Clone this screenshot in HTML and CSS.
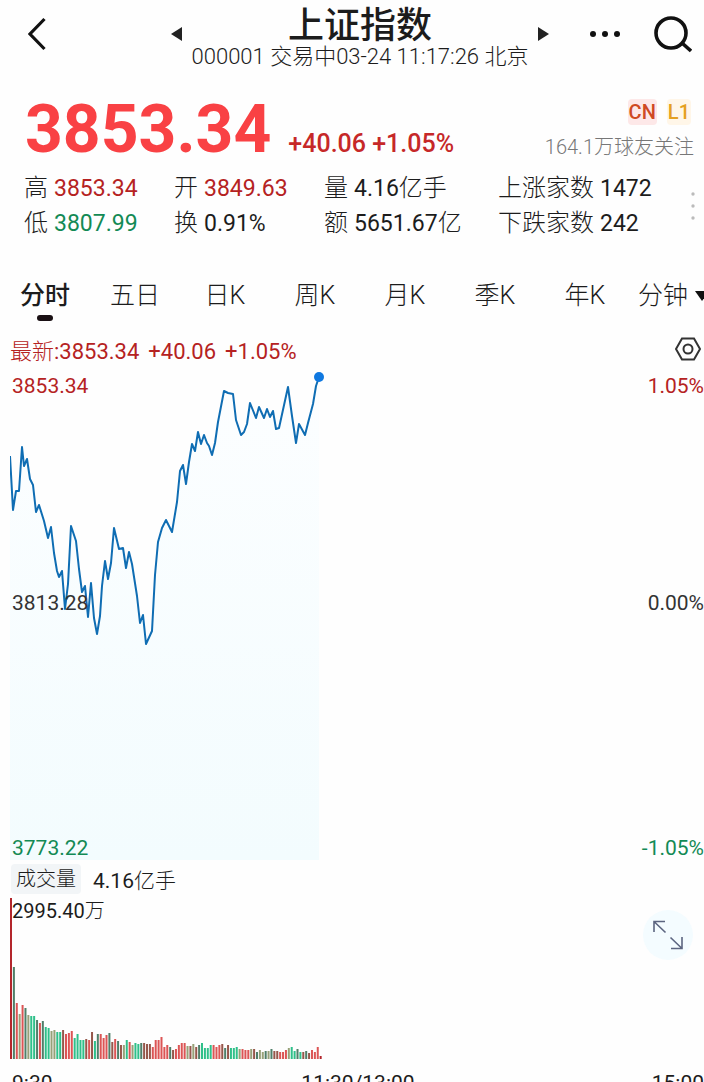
FILE: index.html
```html
<!DOCTYPE html>
<html lang="zh-CN">
<head>
<meta charset="utf-8">
<meta name="viewport" content="width=device-width, initial-scale=1">
<title>上证指数</title>
<link rel="stylesheet" href="styles.css">
</head>
<body>
<div class="page">
  <header class="header">
    <button class="icon-btn back" aria-label="返回">
      <svg width="18" height="34" viewBox="0 0 18 34"><path d="M16.500 2 2 17l14.500 15" fill="none" stroke="#111" stroke-width="3.200"/></svg>
    </button>
    <div class="switcher">
      <button class="icon-btn" aria-label="上一个">
        <svg width="12" height="14" viewBox="0 0 12 14"><path d="M0 7 11 0v14z" fill="#222"/></svg>
      </button>
      <div class="heading">
        <h1 class="title">上证指数</h1>
        <p class="subtitle">000001 交易中03-24 11:17:26 北京</p>
      </div>
      <button class="icon-btn" aria-label="下一个">
        <svg width="12" height="14" viewBox="0 0 12 14"><path d="M12 7 1 0v14z" fill="#222"/></svg>
      </button>
    </div>
    <div class="actions">
      <button class="icon-btn" aria-label="更多">
        <svg width="30" height="8" viewBox="0 0 30 8"><g fill="#111"><circle cx="3" cy="4" r="3"/><circle cx="15" cy="4" r="3"/><circle cx="27" cy="4" r="3"/></g></svg>
      </button>
      <button class="icon-btn" aria-label="搜索">
        <svg width="38" height="38" viewBox="0 0 38 38"><g fill="none" stroke="#111" stroke-width="3.600"><circle cx="17" cy="18" r="15"/><path d="m28 28 9 8"/></g></svg>
      </button>
    </div>
  </header>

  <section class="quote">
    <strong class="price">3853.34</strong>
    <span class="change">+40.06 +1.05%</span>
    <div class="meta">
      <div class="badges"><span class="badge badge-cn">CN</span><span class="badge badge-l1">L1</span></div>
      <p class="followers">164.1万球友关注</p>
    </div>
  </section>

  <section class="stats">
    <dl class="stat-grid">
      <div class="stat"><dt>高</dt><dd class="up">3853.34</dd></div>
      <div class="stat"><dt>开</dt><dd class="up">3849.63</dd></div>
      <div class="stat"><dt>量</dt><dd>4.16<span class="light unit">亿手</span></dd></div>
      <div class="stat"><dt>上涨家数</dt><dd>1472</dd></div>
      <div class="stat"><dt>低</dt><dd class="down">3807.99</dd></div>
      <div class="stat"><dt>换</dt><dd>0.91%</dd></div>
      <div class="stat"><dt>额</dt><dd>5651.67<span class="light unit">亿</span></dd></div>
      <div class="stat"><dt>下跌家数</dt><dd>242</dd></div>
    </dl>
    <button class="icon-btn" aria-label="更多指标">
      <svg width="4" height="28" viewBox="0 0 4 28"><g fill="#bbb"><circle cx="2" cy="2" r="1.700"/><circle cx="2" cy="14" r="1.700"/><circle cx="2" cy="26" r="1.700"/></g></svg>
    </button>
  </section>

  <nav class="tabs">
    <button class="tab active">分时</button>
    <button class="tab">五日</button>
    <button class="tab">日K</button>
    <button class="tab">周K</button>
    <button class="tab">月K</button>
    <button class="tab">季K</button>
    <button class="tab">年K</button>
    <button class="tab tab-menu">分钟<svg width="14" height="10" viewBox="0 0 14 10"><path d="M0 0h14L7 10z" fill="#111"/></svg></button>
  </nav>

  <div class="latest">
    <p class="latest-text"><span><span class="light">最新</span>:3853.34</span><span>+40.06</span><span>+1.05%</span></p>
    <button class="icon-btn" aria-label="设置">
      <svg width="26" height="24" viewBox="0 0 26 24"><g fill="none" stroke="#333" stroke-width="2"><path d="M7 1.500h12L25 12l-6 10.500H7L1 12z"/><circle cx="13" cy="12" r="4.500"/></g></svg>
    </button>
  </div>

  <section class="price-chart">
    <svg class="plot" viewBox="0 0 694 492" preserveAspectRatio="none" aria-hidden="true">
      <defs>
        <linearGradient id="area" x1="0" y1="0" x2="0" y2="1">
          <stop offset="0" stop-color="#fcfeff"/>
          <stop offset="1" stop-color="#f3fcfe"/>
        </linearGradient>
      </defs>
      <path id="price-area" fill="url(#area)"/>
      <polyline id="price-line" fill="none" stroke="#0f6db3" stroke-width="2" stroke-linejoin="round"/>
      <circle cx="309" cy="9" r="5" fill="#0f78e0"/>
    </svg>
    <div class="scale">
      <div class="scale-row up"><span>3853.34</span><span>1.05%</span></div>
      <div class="scale-row mid"><span>3813.28</span><span>0.00%</span></div>
      <div class="scale-row down"><span>3773.22</span><span>-1.05%</span></div>
    </div>
  </section>

  <div class="volume-head">
    <button class="chip">成交量</button>
    <span>4.16<span class="light">亿手</span></span>
  </div>

  <section class="volume-chart">
    <svg class="plot" id="volume" viewBox="0 0 694 162" preserveAspectRatio="none" aria-hidden="true"></svg>
    <span class="volume-max">2995.40<span class="light">万</span></span>
    <button class="expand" aria-label="全屏">
      <svg width="30" height="30" viewBox="0 0 30 30"><path d="M1 12V1.500h11M1.500 2l11 10.500M29 17v11.500H18M28.500 28l-11-10.500" fill="none" stroke="#5c6580" stroke-width="1.600"/></svg>
    </button>
  </section>

  <div class="time-axis"><span>9:30</span><span>11:30/13:00</span><span class="axis-end">15:00</span></div>
</div>
<script src="chart.js"></script>
</body>
</html>
```
FILE: styles.css
```css
* { box-sizing: border-box; }

body {
  margin: 0;
  background: #fefefe;
  color: #1c1c1c;
  font-family: Roboto, "Noto Sans CJK SC", sans-serif;
  font-size: 21px;
  font-weight: 400;
}

h1, p, dl, dd { margin: 0; }

button {
  border: 0;
  padding: 0;
  background: none;
  color: inherit;
  font: inherit;
}

svg { display: block; }

.page {
  height: 100vh;
  overflow: hidden;
}

.icon-btn { flex: none; }

.light { font-weight: 300; }

.up { color: #b52222; }
.down { color: #138a55; }

.header {
  display: grid;
  grid-template-columns: 1fr auto 1fr;
  align-items: center;
  height: 68px;
  padding: 0 12px 0 28px;
}

.back { justify-self: start; }

.switcher {
  display: flex;
  align-items: center;
  gap: 9px;
}

.heading {
  padding-top: 6px;
  text-align: center;
}

.title {
  font-size: 36px;
  font-weight: 500;
  line-height: 40px;
}

.subtitle {
  font-size: 22px;
  font-weight: 300;
  line-height: 22px;
  white-space: nowrap;
}

.actions {
  display: flex;
  align-items: center;
  justify-content: flex-end;
  gap: 34px;
}

.quote {
  display: flex;
  align-items: baseline;
  gap: 17px;
  height: 103px;
  padding: 22px 10px 0 25px;
}

.price {
  color: #f94144;
  font-size: 66px;
  font-weight: 700;
  line-height: 80px;
}

.change {
  color: #c62828;
  font-size: 25px;
  font-weight: 500;
  white-space: nowrap;
}

.meta {
  align-self: flex-start;
  margin-left: auto;
  padding-top: 9px;
}

.badges {
  display: flex;
  justify-content: flex-end;
  gap: 10px;
}

.badge {
  padding: 0 1px;
  border-radius: 4px;
  font-size: 20px;
  font-weight: 500;
  line-height: 26px;
}

.badge-cn { background: #fde8e8; color: #cf4a22; }
.badge-l1 { margin-right: 3px; background: #fff6e8; color: #e5a020; }

.followers {
  color: #777;
  font-size: 20px;
  font-weight: 300;
  line-height: 44px;
  white-space: nowrap;
}

.stats {
  display: flex;
  align-items: center;
  justify-content: space-between;
  height: 70px;
  padding: 0 9px 0 24px;
}

.stat-grid {
  display: grid;
  grid-template-columns: 150px 150px 174px auto;
}

.stat {
  display: flex;
  gap: 6px;
  height: 35px;
  font-size: 23px;
  line-height: 35px;
  white-space: nowrap;
}

.stat dt {
  font-size: 24px;
  font-weight: 300;
}

.unit { font-size: 24px; }

.tabs {
  display: grid;
  grid-template-columns: repeat(7, 1fr) 74px;
  height: 60px;
  margin-top: 29px;
}

.tab {
  display: flex;
  flex-direction: column;
  align-items: center;
  font-size: 25px;
  font-weight: 300;
  line-height: 52px;
  white-space: nowrap;
}

.active { font-weight: 500; }

.active::after {
  content: "";
  width: 16px;
  height: 6px;
  margin-top: -7px;
  border-radius: 3px;
  background: #1a1014;
}

.tab-menu {
  flex-direction: row;
  align-self: start;
  gap: 7px;
  padding-left: 8px;
}

.tab-menu svg { flex: none; }

.latest {
  display: flex;
  align-items: center;
  justify-content: space-between;
  height: 38px;
  padding: 0 3px 0 10px;
}

.latest-text {
  display: flex;
  align-items: baseline;
  gap: 9px;
  color: #b52222;
  font-size: 22px;
}

.price-chart {
  position: relative;
  height: 492px;
  margin-left: 10px;
}

.plot {
  width: 100%;
  height: 100%;
}

.scale {
  position: absolute;
  inset: 2px 0 -4px 2px;
  display: flex;
  flex-direction: column;
  justify-content: space-between;
  line-height: 32px;
}

.scale-row {
  display: flex;
  justify-content: space-between;
}

.mid {
  padding-bottom: 28px;
  color: #333;
}

.volume-head {
  display: flex;
  align-items: center;
  gap: 12px;
  height: 38px;
  padding-left: 11px;
}

.chip {
  padding: 0 5px;
  border-radius: 4px;
  background: #f2f5f7;
  font-size: 20px;
  font-weight: 300;
  line-height: 30px;
}

.volume-chart {
  position: relative;
  height: 162px;
  margin-left: 10px;
}

.volume-max {
  position: absolute;
  top: 0;
  left: 2px;
  font-size: 20px;
  line-height: 26px;
}

.expand {
  position: absolute;
  top: 12px;
  right: 11px;
  display: grid;
  place-items: center;
  width: 50px;
  height: 50px;
  border-radius: 25px;
  background: #f4fcff;
}

.time-axis {
  display: grid;
  grid-template-columns: 1fr auto 1fr;
  padding: 10px 0 0 12px;
  line-height: 26px;
}

.axis-end { justify-self: end; }
```
FILE: chart.js
```js
const SVG_NS = "http://www.w3.org/2000/svg";

// Intraday price trace, in plot units.
const price = [
  [0, 88], [3, 142], [6, 123], [9, 123], [12, 79], [14, 98], [17, 91], [20, 111], [23, 117],
  [26, 144], [29, 137], [34, 153], [38, 170], [41, 159], [44, 185], [47, 203], [49, 209],
  [52, 203], [55, 241], [58, 216], [61, 158], [66, 173], [69, 201], [72, 224], [75, 218],
  [78, 249], [81, 215], [84, 250], [87, 266], [90, 248], [92, 218], [95, 193], [98, 211],
  [101, 195], [104, 160], [109, 181], [113, 180], [116, 200], [119, 184], [122, 196],
  [127, 228], [130, 255], [133, 247], [136, 276], [142, 263], [145, 207], [148, 174],
  [152, 160], [156, 152], [162, 164], [167, 134], [170, 103], [173, 97], [176, 116],
  [179, 94], [182, 76], [185, 83], [188, 64], [191, 76], [194, 67], [197, 75], [199, 78],
  [202, 87], [205, 75], [208, 54], [214, 23], [218, 25], [223, 26], [226, 52], [231, 67],
  [234, 64], [237, 56], [240, 35], [246, 50], [249, 39], [254, 50], [257, 41], [260, 49],
  [263, 43], [266, 61], [269, 60], [278, 19], [282, 48], [286, 75], [289, 56], [295, 67],
  [298, 55], [303, 36], [306, 18], [309, 9]
];

const line = price.map(point => point.join(",")).join(" ");
document.getElementById("price-line").setAttribute("points", line);
document.getElementById("price-area").setAttribute("d", "M0,492 L" + line + " L309,492Z");

// Volume per minute, with one colour code per bar.
const volume = [
  161, 92, 56, 45, 54, 51, 44, 43, 43, 39, 36, 38, 32, 31, 28, 29, 27, 27, 29, 25, 26, 28,
  21, 25, 19, 19, 20, 19, 27, 18, 25, 25, 21, 24, 26, 17, 20, 18, 14, 14, 19, 17, 14, 16,
  15, 16, 16, 15, 15, 12, 19, 19, 22, 12, 14, 12, 9, 10, 14, 16, 16, 13, 13, 15, 12, 14,
  16, 11, 11, 14, 14, 12, 14, 15, 11, 14, 11, 11, 12, 10, 10, 9, 9, 10, 10, 7, 9, 7, 8, 8,
  10, 8, 8, 7, 7, 9, 11, 12, 8, 10, 7, 7, 8, 6, 9, 7, 12, 3
];
const codes =
  "RdrmrdmggdrdggmmggbrrrggggbrbgdrrrdbrdbmgrmggdbbbrrrrrrdbrrrrmbmbdggggrrrbdbgggmrrrmbdmmdmdbbrrrmggdgbdbrrrR";
const colors = { R: "#b3262c", r: "#dc5555", g: "#2fc08a", b: "#96574b", d: "#4f7f69", m: "#97a178" };

const plot = document.getElementById("volume");
volume.forEach((height, i) => {
  const bar = document.createElementNS(SVG_NS, "rect");
  bar.setAttribute("x", (i * 2.894).toFixed(2));
  bar.setAttribute("y", 161 - height);
  bar.setAttribute("width", 2);
  bar.setAttribute("height", height);
  bar.setAttribute("fill", colors[codes[i]] || colors.r);
  plot.append(bar);
});
```
